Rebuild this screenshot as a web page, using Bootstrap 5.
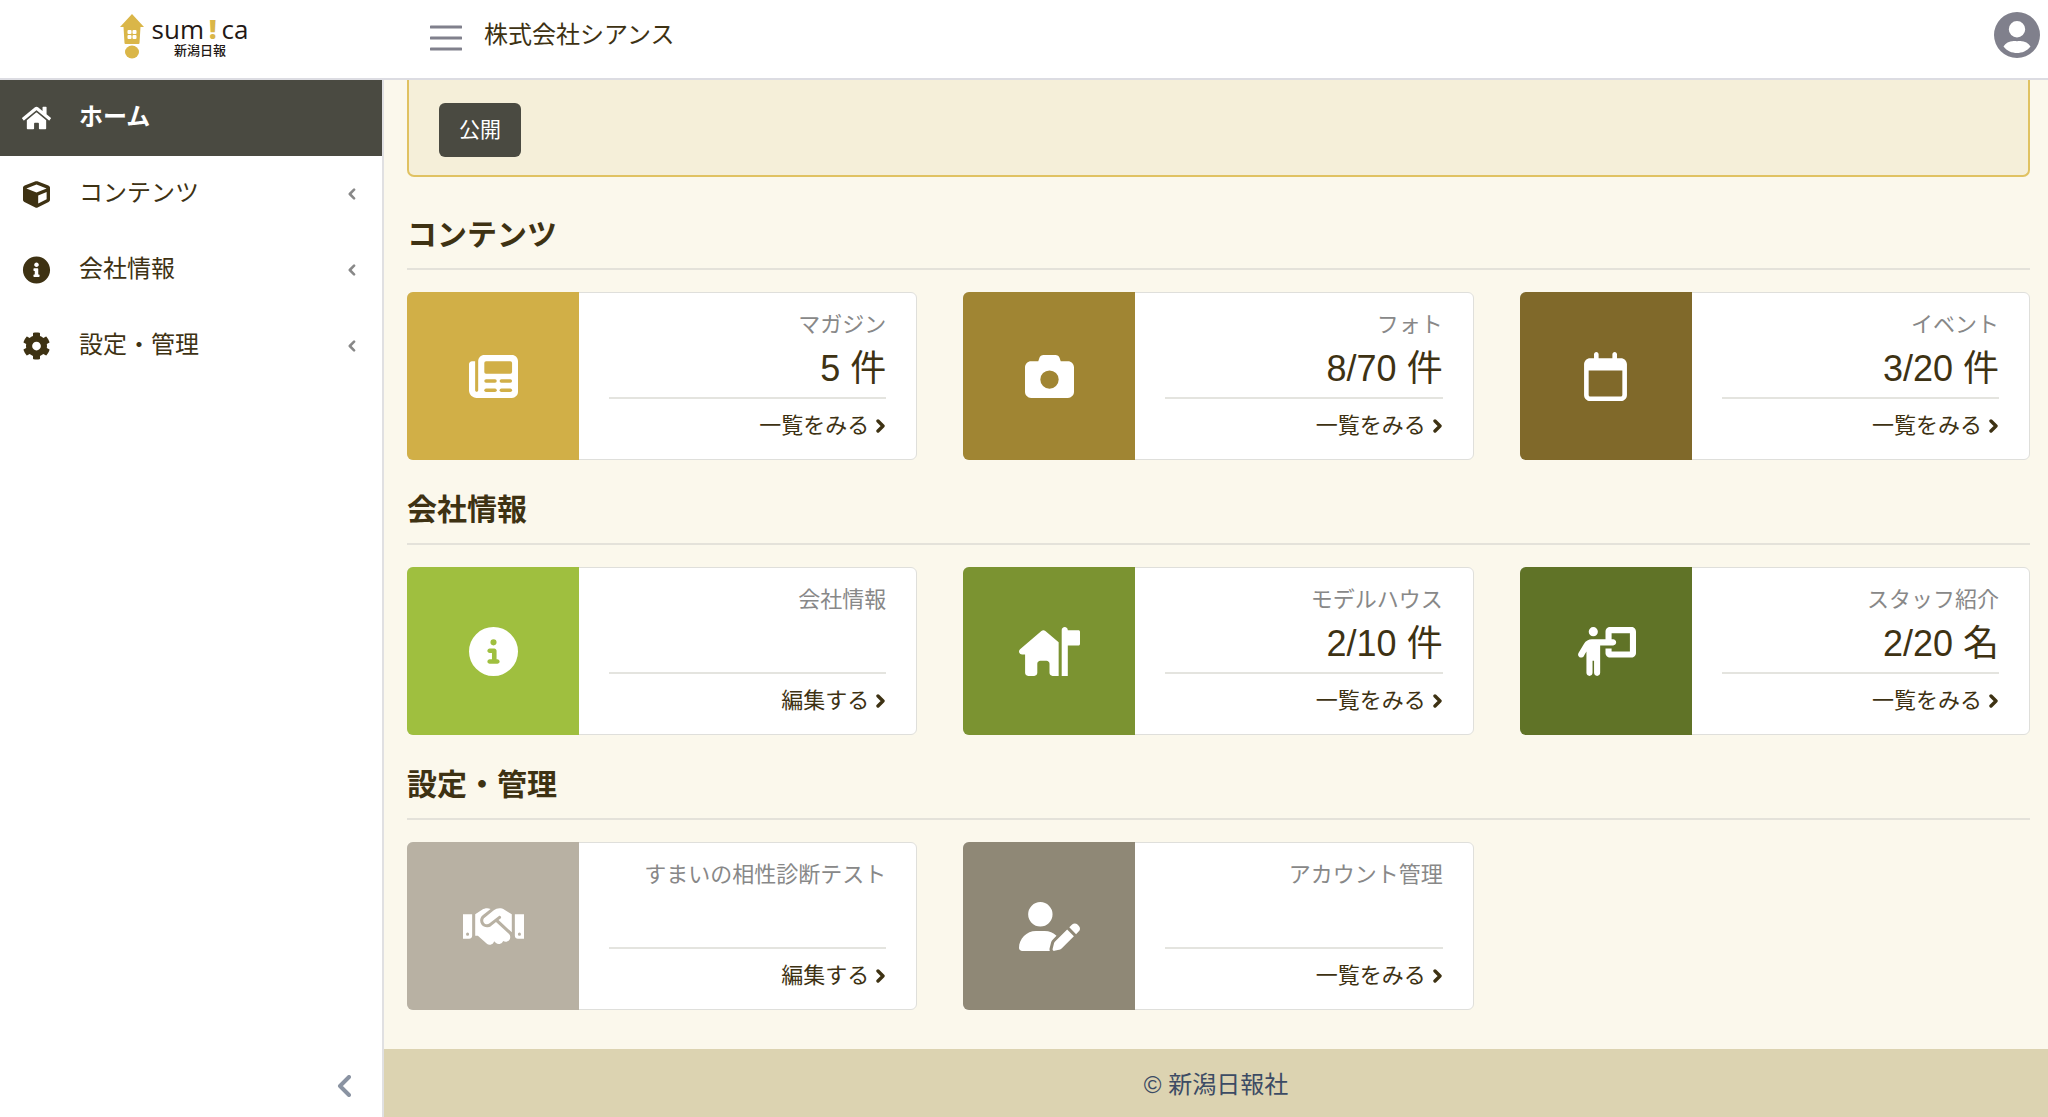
<!DOCTYPE html>
<html lang="ja">
<head>
<meta charset="utf-8">
<meta name="viewport" content="width=device-width, initial-scale=1">
<title>sumica 管理画面</title>
<link href="https://cdn.jsdelivr.net/npm/bootstrap@5.3.0/dist/css/bootstrap.min.css" rel="stylesheet">
<style>
:root{--ink:#3e3213;--line:#dfdfdb;--side:384px;--dark:#4a4a41}
body{font-family:"Liberation Sans","Noto Sans CJK JP",sans-serif;font-size:24px;line-height:36px;color:var(--ink);background:#fbf8ec}
a{color:inherit;text-decoration:none}
svg{display:block;fill:currentColor;flex:none}
.topbar{height:80px;border-bottom:2px solid #dcdce2;padding-right:8px}
.brand-area{width:var(--side)}
.brand-area a{color:#231815;margin-right:16px;margin-bottom:4px}
.word{font-family:"Open Sans","Noto Sans",sans-serif;font-size:26px;line-height:30px;font-weight:500;gap:5px}
.word b{color:#dab648;font-weight:800}
.paper{font-size:13px;line-height:14px;font-weight:500}
.burger{color:#80808c;margin:0 22px 3px 46px}
.avatar{color:#80808c}
.sidebar{width:var(--side);border-right:2px solid #e0e0e2}
.menu-link{height:76px;padding:0 26px 0 22px;gap:28px}
.menu-link.active{background:var(--dark);color:#fff;font-weight:700}
.menu-link .label-text{flex:1;padding-bottom:2px}
.menu-link .arrow{color:#888}
.collapse-btn{color:#8a93a2;height:62px;padding:0 31px}
.content{padding:0 18px 39px 23px}
.notice{border:2px solid #e0c262;border-top:0;background:#f5efd9;border-radius:0 0 7px 7px;padding:23px 30px 18px}
.btn-open{--bs-btn-bg:#4a4a41;--bs-btn-color:#fff;--bs-btn-hover-bg:#36362f;--bs-btn-hover-color:#fff;font-size:21px;line-height:30px;padding:11px 19px;border-radius:6px}
.sec-title{font-size:30px;line-height:36px;font-weight:700;padding-bottom:15px;border-bottom:2px solid #e4e2da;margin-bottom:22px}
.tiles{--bs-gutter-x:46px}
.tile{border:1px solid var(--line);border-radius:6px}
.tile-icon{width:172px;margin:-1px 0 -1px -1px;background:var(--tone);color:#fff}
.tile-icon .cut{fill:var(--tone)}
.tile-info{padding:16px 30px 6px 30px}
.tile-name{font-size:22px;line-height:32px;color:#888}
.tile-count{font-size:36px;line-height:56px;min-height:56px}
.tile-more{font-size:22px;line-height:54px;border-top:2px solid #e4e4df;gap:7px}
.foot{background:#dcd3b1;color:#3c4b64;height:68px;padding-top:3px}
</style>
</head>
<body class="d-flex flex-column min-vh-100">

<svg width="0" height="0" class="position-absolute" aria-hidden="true">
  <symbol id="chev-l" viewBox="0 0 10 14"><path d="M8 2L3 7l5 5" fill="none" stroke="currentColor" stroke-width="3" stroke-linecap="round" stroke-linejoin="round"/></symbol>
  <symbol id="chev-r" viewBox="0 0 10 14"><path d="M2 2l5 5-5 5" fill="none" stroke="currentColor" stroke-width="3.4" stroke-linecap="round" stroke-linejoin="round"/></symbol>
</svg>

<header class="topbar bg-white d-flex align-items-center">
  <div class="brand-area d-flex justify-content-center">
    <a href="#" class="d-flex gap-2">
      <svg width="24" height="46" viewBox="0 0 24 46"><path fill="#dab648" d="M12 0L24 13H20.500L19.500 29q0 1-1 1H5.500q-1 0-1-1L3.500 13H0z"/><g fill="#fff"><rect x="7.500" y="16" width="4" height="4" rx="1"/><rect x="12.500" y="16" width="4" height="4" rx="1"/><rect x="7.500" y="21" width="4" height="4" rx="1"/><rect x="12.500" y="21" width="4" height="4" rx="1"/></g><ellipse cx="12" cy="38" rx="7" ry="6.500" fill="#dab648"/></svg>
      <span class="d-flex flex-column align-items-center">
        <span class="word d-flex"><span>sum</span><b>!</b><span>ca</span></span>
        <span class="paper">新潟日報</span>
      </span>
    </a>
  </div>
  <button type="button" class="btn p-0 border-0 burger" aria-label="メニュー">
    <svg width="32" height="26" viewBox="0 0 32 26"><path d="M1 2h30M1 13h30M1 24h30" stroke="currentColor" stroke-width="3" stroke-linecap="round"/></svg>
  </button>
  <div class="pb-2">株式会社シアンス</div>
  <button type="button" class="btn p-0 border-0 ms-auto avatar mb-2" aria-label="アカウント">
    <svg width="46" height="46" viewBox="0 0 46 46"><path fill-rule="evenodd" d="M23 0a23 23 0 1 1 0 46 23 23 0 0 1 0-46zM23 9a8.200 8.200 0 1 0 0 16.400A8.200 8.200 0 0 0 23 9zM9.500 34.500C13 39 18 41 23 41s10-2 13.500-6.500C34 30.500 29.500 28 23 29.300 16.500 28 12 30.500 9.500 34.500z"/></svg>
  </button>
</header>

<div class="d-flex flex-grow-1">
  <aside class="sidebar bg-white flex-shrink-0 d-flex flex-column">
    <nav>
      <a href="#" class="menu-link active d-flex align-items-center" aria-current="page">
        <svg width="29" height="26" viewBox="0 0 576 512"><path d="M280.37 148.26L96 300.11V464a16 16 0 0 0 16 16l112.06-.29a16 16 0 0 0 15.920-16V368a16 16 0 0 1 16-16h64a16 16 0 0 1 16 16v95.640a16 16 0 0 0 16 16.050L464 480a16 16 0 0 0 16-16V300L295.67 148.26a12.190 12.190 0 0 0-15.300 0zM571.600 251.470L488 182.560V44.050a12 12 0 0 0-12-12h-56a12 12 0 0 0-12 12v72.610L318.470 43a48 48 0 0 0-61 0L4.340 251.470a12 12 0 0 0-1.600 16.900l25.500 31A12 12 0 0 0 45.150 301l235.220-193.740a12.190 12.190 0 0 1 15.300 0L530.900 301a12 12 0 0 0 16.900-1.600l25.500-31a12 12 0 0 0-1.700-16.930z"/></svg>
        <span class="label-text">ホーム</span>
      </a>
      <a href="#" class="menu-link d-flex align-items-center">
        <svg width="29" height="27" viewBox="0 0 512 512"><path d="M239.100 6.300l-208 78c-18.700 7-31.100 25-31.100 45v225.100c0 18.200 10.300 34.800 26.500 42.900l208 104c13.500 6.800 29.400 6.800 42.900 0l208-104c16.300-8.100 26.500-24.800 26.500-42.900V129.300c0-20-12.400-37.900-31.100-44.900l-208-78C262 2.200 250 2.200 239.100 6.300zM256 68.400l192 72v1.100l-192 78-192-78v-1.100l192-72zm32 356V275.500l160-65v133.900l-160 80z"/></svg>
        <span class="label-text">コンテンツ</span>
        <svg class="arrow" width="9" height="12"><use href="#chev-l"/></svg>
      </a>
      <a href="#" class="menu-link d-flex align-items-center">
        <svg width="29" height="28" viewBox="0 0 512 512"><path d="M256 8C119.043 8 8 119.083 8 256c0 136.997 111.043 248 248 248s248-111.003 248-248C504 119.083 392.957 8 256 8zm0 110c23.196 0 42 18.804 42 42s-18.804 42-42 42-42-18.804-42-42 18.804-42 42-42zm56 254c0 6.627-5.373 12-12 12h-88c-6.627 0-12-5.373-12-12v-24c0-6.627 5.373-12 12-12h12v-64h-12c-6.627 0-12-5.373-12-12v-24c0-6.627 5.373-12 12-12h64c6.627 0 12 5.373 12 12v100h12c6.627 0 12 5.373 12 12v24z"/></svg>
        <span class="label-text">会社情報</span>
        <svg class="arrow" width="9" height="12"><use href="#chev-l"/></svg>
      </a>
      <a href="#" class="menu-link d-flex align-items-center">
        <svg width="29" height="28" viewBox="0 0 512 512"><path d="M487.400 315.700l-42.600-24.600c4.300-23.200 4.300-47 0-70.200l42.600-24.600c4.900-2.800 7.100-8.600 5.500-14-11.100-35.600-30-67.800-54.700-94.600-3.800-4.100-10-5.100-14.800-2.300L380.800 110c-17.900-15.400-38.500-27.300-60.800-35.100V25.800c0-5.600-3.900-10.500-9.400-11.700-36.700-8.200-74.300-7.800-109.200 0-5.500 1.200-9.400 6.100-9.400 11.700V75c-22.200 7.900-42.800 19.800-60.800 35.100L88.700 85.500c-4.900-2.800-11-1.900-14.800 2.300-24.700 26.700-43.600 58.900-54.700 94.600-1.700 5.400.6 11.200 5.500 14L67.300 221c-4.300 23.200-4.300 47 0 70.200l-42.600 24.600c-4.900 2.800-7.100 8.600-5.500 14 11.100 35.600 30 67.800 54.700 94.600 3.800 4.100 10 5.100 14.800 2.300l42.600-24.600c17.900 15.400 38.500 27.300 60.800 35.100v49.200c0 5.600 3.900 10.500 9.400 11.700 36.700 8.200 74.300 7.800 109.200 0 5.500-1.200 9.400-6.100 9.400-11.700v-49.200c22.200-7.900 42.800-19.800 60.800-35.100l42.600 24.600c4.900 2.800 11 1.900 14.800-2.300 24.700-26.700 43.600-58.900 54.700-94.600 1.500-5.500-.7-11.300-5.600-14.100zM256 336c-44.100 0-80-35.900-80-80s35.900-80 80-80 80 35.900 80 80-35.900 80-80 80z"/></svg>
        <span class="label-text">設定・管理</span>
        <svg class="arrow" width="9" height="12"><use href="#chev-l"/></svg>
      </a>
    </nav>
    <button type="button" class="btn border-0 rounded-0 mt-auto d-flex align-items-center justify-content-end collapse-btn" aria-label="サイドバーを閉じる">
      <svg width="14" height="22" viewBox="0 0 14 22"><path d="M12 2L3 11l9 9" fill="none" stroke="currentColor" stroke-width="4" stroke-linecap="round" stroke-linejoin="round"/></svg>
    </button>
  </aside>

  <div class="flex-grow-1 d-flex flex-column">
    <main class="content flex-grow-1">
      <div class="notice"><button type="button" class="btn btn-open">公開</button></div>

      <section class="pt-4 mt-3">
        <h2 class="sec-title">コンテンツ</h2>
        <div class="row tiles">
          <div class="col-4">
            <div class="tile bg-white d-flex">
              <div class="tile-icon rounded-start d-flex align-items-center justify-content-center" style="--tone:#d1af47">
                <svg width="49" height="49" viewBox="0 0 512 512"><path d="M96 96c0-35.300 28.700-64 64-64H448c35.300 0 64 28.700 64 64V416c0 35.300-28.700 64-64 64H80c-44.200 0-80-35.800-80-80V128c0-17.700 14.300-32 32-32h32V400c0 8.800 7.200 16 16 16s16-7.200 16-16V96z"/><g class="cut"><rect x="160" y="96" width="290" height="130" rx="18"/><rect x="160" y="284" width="130" height="36" rx="18"/><rect x="320" y="284" width="130" height="36" rx="18"/><rect x="160" y="382" width="130" height="36" rx="18"/><rect x="320" y="382" width="130" height="36" rx="18"/></g></svg>
              </div>
              <div class="tile-info flex-grow-1 text-end">
                <div class="tile-name">マガジン</div>
                <div class="tile-count">5 件</div>
                <a href="#" class="tile-more d-flex align-items-center justify-content-end">一覧をみる<svg width="10" height="14"><use href="#chev-r"/></svg></a>
              </div>
            </div>
          </div>
          <div class="col-4">
            <div class="tile bg-white d-flex">
              <div class="tile-icon rounded-start d-flex align-items-center justify-content-center" style="--tone:#a08533">
                <svg width="49" height="49" viewBox="0 0 512 512"><path d="M149.100 64.800L138.700 96H64C28.700 96 0 124.700 0 160V416c0 35.300 28.700 64 64 64H448c35.300 0 64-28.700 64-64V160c0-35.300-28.700-64-64-64H373.300L362.900 64.800C356.400 45.200 338.100 32 317.400 32H194.600c-20.700 0-39 13.200-45.500 32.800zM256 192a96 96 0 1 1 0 192 96 96 0 1 1 0-192z"/></svg>
              </div>
              <div class="tile-info flex-grow-1 text-end">
                <div class="tile-name">フォト</div>
                <div class="tile-count">8/70 件</div>
                <a href="#" class="tile-more d-flex align-items-center justify-content-end">一覧をみる<svg width="10" height="14"><use href="#chev-r"/></svg></a>
              </div>
            </div>
          </div>
          <div class="col-4">
            <div class="tile bg-white d-flex">
              <div class="tile-icon rounded-start d-flex align-items-center justify-content-center" style="--tone:#80692a">
                <svg width="43" height="49" viewBox="0 0 448 512"><path d="M152 24c0-13.300-10.700-24-24-24s-24 10.700-24 24V64H64C28.700 64 0 92.700 0 128v16 48V448c0 35.300 28.700 64 64 64H384c35.300 0 64-28.700 64-64V192 144 128c0-35.300-28.700-64-64-64H344V24c0-13.300-10.700-24-24-24s-24 10.700-24 24V64H152V24zM48 192H400V448c0 8.800-7.200 16-16 16H64c-8.800 0-16-7.200-16-16V192z"/></svg>
              </div>
              <div class="tile-info flex-grow-1 text-end">
                <div class="tile-name">イベント</div>
                <div class="tile-count">3/20 件</div>
                <a href="#" class="tile-more d-flex align-items-center justify-content-end">一覧をみる<svg width="10" height="14"><use href="#chev-r"/></svg></a>
              </div>
            </div>
          </div>
        </div>
      </section>

      <section class="pt-4 mt-2">
        <h2 class="sec-title">会社情報</h2>
        <div class="row tiles">
          <div class="col-4">
            <div class="tile bg-white d-flex">
              <div class="tile-icon rounded-start d-flex align-items-center justify-content-center" style="--tone:#9fbf3f">
                <svg width="49" height="49" viewBox="0 0 512 512"><path d="M256 512A256 256 0 1 0 256 0a256 256 0 1 0 0 512zM216 336h24V272H216c-13.300 0-24-10.700-24-24s10.700-24 24-24h48c13.300 0 24 10.700 24 24v88h8c13.300 0 24 10.700 24 24s-10.700 24-24 24H216c-13.300 0-24-10.700-24-24s10.700-24 24-24zm40-208a32 32 0 1 1 0 64 32 32 0 1 1 0-64z"/></svg>
              </div>
              <div class="tile-info flex-grow-1 text-end">
                <div class="tile-name">会社情報</div>
                <div class="tile-count"></div>
                <a href="#" class="tile-more d-flex align-items-center justify-content-end">編集する<svg width="10" height="14"><use href="#chev-r"/></svg></a>
              </div>
            </div>
          </div>
          <div class="col-4">
            <div class="tile bg-white d-flex">
              <div class="tile-icon rounded-start d-flex align-items-center justify-content-center" style="--tone:#7b9331">
                <svg width="61" height="49" viewBox="0 0 640 512"><path d="M480 0c-17.700 0-32 14.300-32 32V192 512h64V192H624c8.800 0 16-7.200 16-16V48c0-8.800-7.200-16-16-16H512c0-17.700-14.300-32-32-32zM416 159L276.800 39.700c-12-10.300-29.700-10.300-41.700 0l-224 192C1 240.400-2.700 254.500 2 267.100S18.600 288 32 288H64V480c0 17.700 14.300 32 32 32h64c17.700 0 32-14.300 32-32V384c0-17.700 14.300-32 32-32h64c17.700 0 32 14.300 32 32v96c0 17.700 14.300 32 32 32h64V159z"/></svg>
              </div>
              <div class="tile-info flex-grow-1 text-end">
                <div class="tile-name">モデルハウス</div>
                <div class="tile-count">2/10 件</div>
                <a href="#" class="tile-more d-flex align-items-center justify-content-end">一覧をみる<svg width="10" height="14"><use href="#chev-r"/></svg></a>
              </div>
            </div>
          </div>
          <div class="col-4">
            <div class="tile bg-white d-flex">
              <div class="tile-icon rounded-start d-flex align-items-center justify-content-center" style="--tone:#607327">
                <svg width="61" height="49" viewBox="0 0 640 512"><path d="M192 96a48 48 0 1 0 0-96 48 48 0 1 0 0 96zm-8 384V352h16V480c0 17.700 14.300 32 32 32s32-14.300 32-32V192h56 64 16c17.700 0 32-14.300 32-32s-14.300-32-32-32H384V64H576V256H384V224H320v48c0 26.500 21.500 48 48 48H592c26.500 0 48-21.500 48-48V48c0-26.500-21.500-48-48-48H368c-26.500 0-48 21.500-48 48v80H243.100 177.100c-33.700 0-64.900 17.700-82.300 46.600l-58.300 97c-9.100 15.100-4.200 34.800 10.900 43.900s34.800 4.200 43.900-10.900L120 256.900V480c0 17.700 14.300 32 32 32s32-14.300 32-32z"/></svg>
              </div>
              <div class="tile-info flex-grow-1 text-end">
                <div class="tile-name">スタッフ紹介</div>
                <div class="tile-count">2/20 名</div>
                <a href="#" class="tile-more d-flex align-items-center justify-content-end">一覧をみる<svg width="10" height="14"><use href="#chev-r"/></svg></a>
              </div>
            </div>
          </div>
        </div>
      </section>

      <section class="pt-4 mt-2">
        <h2 class="sec-title">設定・管理</h2>
        <div class="row tiles">
          <div class="col-4">
            <div class="tile bg-white d-flex">
              <div class="tile-icon rounded-start d-flex align-items-center justify-content-center" style="--tone:#b8b1a3">
                <svg width="61" height="49" viewBox="0 0 640 512"><path d="M323.400 85.200l-96.800 78.400c-16.100 13-19.200 36.400-7 53.100c12.900 17.800 38 21.300 55.300 7.800l99.300-77.200c7-5.400 17-4.200 22.500 2.800s4.200 17-2.800 22.500l-20.900 16.200L512 316.800V128h-.7l-3.900-2.500L434.800 79c-15.300-9.800-33.200-15-51.400-15c-21.800 0-43 7.500-60 21.200zm22.800 124.400l-51.700 40.200C263 274.300 217.300 268 193.700 235.600c-22.200-30.500-16.600-73.100 12.700-96.800l83.200-67.300c-11.600-4.900-24.100-7.400-36.800-7.400C234 64 215.700 69.600 200 80l-72 48V352h28.200l91.400 83.400c19.600 17.900 49.900 16.500 67.800-3.100c5.500-6.100 9.200-13.200 11.100-20.600l17 15.600c19.500 17.900 49.900 16.600 67.800-2.900c4.500-4.900 7.800-10.600 9.900-16.500c19.400 13 45.800 10.300 62.100-7.500c17.900-19.500 16.600-49.900-2.900-67.800l-134.200-123zM0 128V384H64c17.700 0 32-14.300 32-32V128H0zM48 320a16 16 0 1 1 0 32 16 16 0 1 1 0-32zM544 128V352c0 17.700 14.300 32 32 32h64V128H544zm32 208a16 16 0 1 1 32 0 16 16 0 1 1 -32 0z"/></svg>
              </div>
              <div class="tile-info flex-grow-1 text-end">
                <div class="tile-name">すまいの相性診断テスト</div>
                <div class="tile-count"></div>
                <a href="#" class="tile-more d-flex align-items-center justify-content-end">編集する<svg width="10" height="14"><use href="#chev-r"/></svg></a>
              </div>
            </div>
          </div>
          <div class="col-4">
            <div class="tile bg-white d-flex">
              <div class="tile-icon rounded-start d-flex align-items-center justify-content-center" style="--tone:#8f8876">
                <svg width="61" height="49" viewBox="0 0 640 512"><path d="M224 256A128 128 0 1 0 224 0a128 128 0 1 0 0 256zm-45.700 48C79.800 304 0 383.800 0 482.300C0 498.700 13.300 512 29.700 512H322.800c-3.100-8.800-3.700-18.400-1.400-27.800l15-60.100c2.800-11.300 8.600-21.500 16.800-29.700l40.300-40.300c-32.100-31-75.700-50.100-123.900-50.100H178.300zm435.500-68.300c-15.600-15.600-40.900-15.600-56.600 0l-29.400 29.400 71 71 29.400-29.400c15.600-15.600 15.600-40.900 0-56.600l-14.400-14.400zM375.900 417c-4.100 4.100-7 9.200-8.400 14.900l-15 60.100c-1.400 5.500 .2 11.200 4.200 15.200s9.700 5.600 15.200 4.200l60.100-15c5.600-1.400 10.800-4.300 14.900-8.400L576.100 358.700l-71-71L375.900 417z"/></svg>
              </div>
              <div class="tile-info flex-grow-1 text-end">
                <div class="tile-name">アカウント管理</div>
                <div class="tile-count"></div>
                <a href="#" class="tile-more d-flex align-items-center justify-content-end">一覧をみる<svg width="10" height="14"><use href="#chev-r"/></svg></a>
              </div>
            </div>
          </div>
        </div>
      </section>
    </main>
    <footer class="foot d-flex align-items-center justify-content-center">© 新潟日報社</footer>
  </div>
</div>

<script src="https://cdn.jsdelivr.net/npm/bootstrap@5.3.0/dist/js/bootstrap.bundle.min.js"></script>
</body>
</html>
